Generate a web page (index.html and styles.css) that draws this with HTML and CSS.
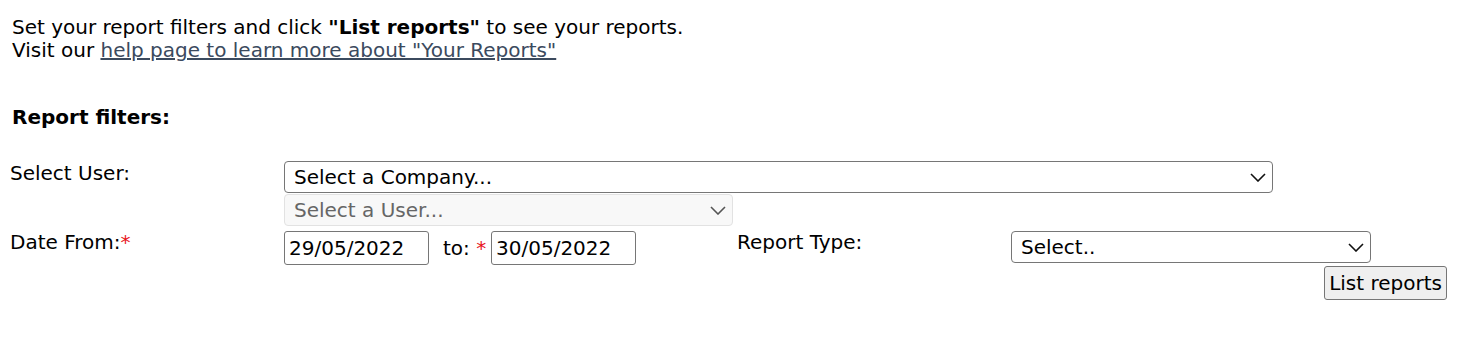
FILE: index.html
```html
<!DOCTYPE html>
<html lang="en">

<head>
    <meta charset="UTF-8">
    <title>Your Reports</title>
    <link rel="stylesheet" href="styles.css">
</head>

<body>
    <main>
        <p class="intro">
            Set your report filters and click <b>"List reports"</b> to see your reports.<br>
            Visit our <a href="#">help page to learn more about "Your Reports"</a>
        </p>

        <h3 class="filters-title">Report filters:</h3>

        <div class="form-row user-row">
            <label class="field-label">Select User:</label>
            <div class="field-stack">
                <div class="select select-company">
                    <span>Select a Company...</span>
                    <svg class="chevron" viewBox="0 0 16 9"><path d="M1 1l7 7 7-7" /></svg>
                </div>
                <div class="select select-user disabled">
                    <span>Select a User...</span>
                    <svg class="chevron" viewBox="0 0 16 9"><path d="M1 1l7 7 7-7" /></svg>
                </div>
            </div>
        </div>

        <div class="form-row date-row">
            <label class="field-label">Date From:<span class="req">*</span></label>
            <input class="date-input" value="29/05/2022">
            <span class="to-label">to: <span class="req">*</span></span>
            <input class="date-input" value="30/05/2022">
            <label class="type-label">Report Type:</label>
            <div class="select select-type">
                <span>Select..</span>
                <svg class="chevron" viewBox="0 0 16 9"><path d="M1 1l7 7 7-7" /></svg>
            </div>
        </div>

        <div class="button-row">
            <button class="list-button">List reports</button>
        </div>
    </main>
</body>

</html>
```

FILE: styles.css
```css
body {
    margin: 0;
    font-family: "DejaVu Sans", Verdana, sans-serif;
    font-size: 20px;
    color: #000;
    background: #fff;
}

main {
    padding: 16px 0 0 10px;
}

.intro {
    margin: 0 0 0 2px;
    line-height: 23px;
}

.intro a {
    color: #3b4a5e;
}

.filters-title {
    margin: 43px 0 0 2px;
    font-size: 20px;
    line-height: 24px;
}

.form-row {
    display: flex;
    align-items: flex-start;
}

.field-label {
    width: 274px;
    flex-shrink: 0;
    line-height: 24px;
}

.user-row {
    margin-top: 32px;
}

.field-stack {
    display: flex;
    flex-direction: column;
    gap: 1px;
}

.select {
    display: flex;
    align-items: center;
    justify-content: space-between;
    box-sizing: border-box;
    height: 32px;
    padding: 0 6px 0 9px;
    border: 1px solid #767676;
    border-radius: 4px;
    background: #fff;
}

.chevron {
    width: 16px;
    height: 9px;
    fill: none;
    stroke: #111;
    stroke-width: 1.6;
}

.select-company {
    width: 989px;
}

.select-user {
    width: 449px;
}

.disabled {
    color: #666;
    background: #f8f8f8;
    border-color: #e2e2e2;
}

.disabled .chevron {
    stroke: #555;
}

.date-row {
    margin-top: 4px;
}

.req {
    color: #e8141b;
}

.date-input {
    box-sizing: border-box;
    width: 145px;
    height: 34px;
    margin: 1px 0 0;
    padding: 0 4px;
    font: inherit;
    border: 1px solid #767676;
    border-radius: 3px;
}

.to-label {
    margin: 6px 0 0 14px;
    width: 48px;
    line-height: 24px;
}

.type-label {
    margin: 0 0 0 101px;
    width: 274px;
    line-height: 24px;
}

.select-type {
    width: 360px;
    margin-top: 1px;
}

.button-row {
    display: flex;
    justify-content: flex-end;
    padding-right: 15px;
    margin-top: 1px;
}

.list-button {
    height: 34px;
    padding: 0 4px;
    font: inherit;
    background: #efefef;
    border: 1px solid #767676;
    border-radius: 3px;
}
```
